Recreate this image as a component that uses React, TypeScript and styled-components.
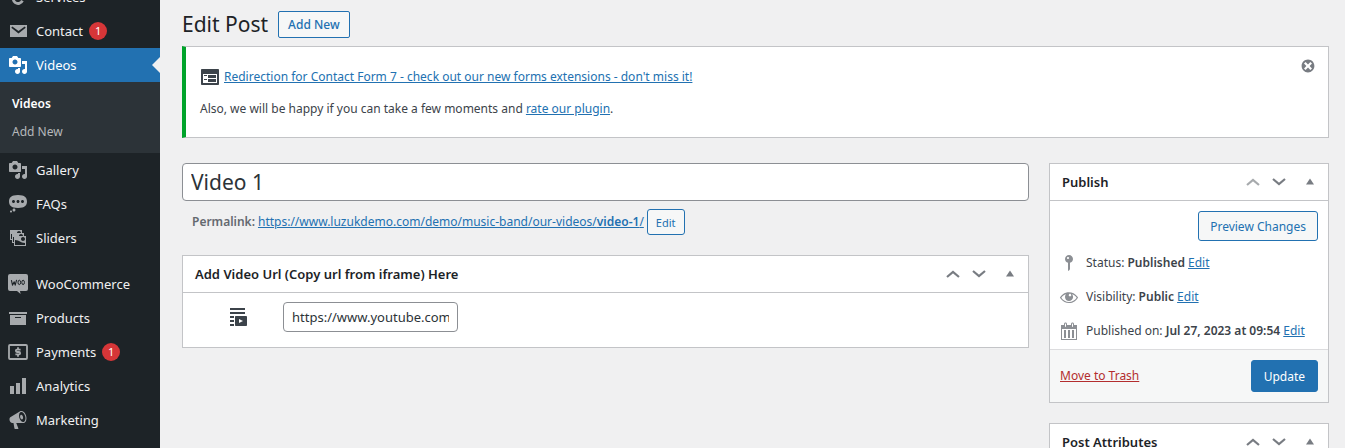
import React from "react";
import styled, { createGlobalStyle, css } from "styled-components";

const GlobalStyle = createGlobalStyle`
  *, *::before, *::after { box-sizing: border-box; }
  body {
    margin: 0;
    background: #f0f0f1;
    color: #3c434a;
    font-family: "Segoe UI", "Noto Sans", "Open Sans", sans-serif;
    font-size: 12px;
    line-height: 18px;
  }
  button, input { font-family: inherit; }
  h1, h2, p, ul, dl { margin: 0; padding: 0; }
  ul { list-style: none; }
`;

const blue = "#2271b1";
const line = "#c3c4c7";

/* ---------- icons ---------- */

const icons = {
  email:
    "M2 4h17v12H2V4zm8.5 8.6l7.2-5.8-1-1.3-6.2 4.4-6.2-4.4-1 1.3z",
  media:
    "M13 11V4c0-.55-.45-1-1-1h-1.67L9 1H5L3.67 3H2c-.55 0-1 .45-1 1v7c0 .55.45 1 1 1h10c.55 0 1-.45 1-1zM7 4.5c1.38 0 2.5 1.12 2.5 2.5S8.38 9.5 7 9.5 4.5 8.38 4.5 7 5.62 4.5 7 4.5zM14 6h5v10.5c0 1.38-1.12 2.5-2.5 2.5S14 17.88 14 16.5s1.12-2.5 2.5-2.5c.17 0 .34.02.5.05V9h-3V6zm-4 8.05V13h2v3.5c0 1.38-1.12 2.5-2.5 2.5S7 17.88 7 16.5 8.12 14 9.5 14c.17 0 .34.02.5.05z",
  status:
    "M10 1c7 0 9 2.91 9 6.5S17 14 10 14s-9-2.91-9-6.5S3 1 10 1zM5.5 9C6.33 9 7 8.33 7 7.5S6.33 6 5.5 6 4 6.67 4 7.5 4.67 9 5.5 9zM10 9c.83 0 1.5-.67 1.5-1.5S10.83 6 10 6s-1.5.67-1.5 1.5S9.17 9 10 9zm4.5 0c.83 0 1.5-.67 1.5-1.5S15.33 6 14.5 6 13 6.67 13 7.5 13.67 9 14.5 9zM6 14.5c.83 0 1.5.67 1.5 1.5s-.67 1.5-1.5 1.5-1.5-.67-1.5-1.5.67-1.5 1.5-1.5zm-3 2c.55 0 1 .45 1 1s-.45 1-1 1-1-.45-1-1 .45-1 1-1z",
  images:
    "M4 15v-3H2V2h12v3h2v3h2v10H6v-3H4zm7-12c-1.1 0-2 .9-2 2h4c0-1.1-.89-2-2-2zm-7 8V6H3v5h1zm7-3h4c0-1.1-.89-2-2-2-1.1 0-2 .9-2 2zm-5 6V9H5v5h1zm9-1c1.1 0 2-.89 2-2 0-1.1-.9-2-2-2s-2 .9-2 2c0 1.11.9 2 2 2zm2 4v-2c-5 0-5-3-10-3v5h10z",
  archive: "M19 4v2H1V4h18zM2 7h16v10H2V7zm11 3V9H7v1h6z",
  chart: "M18 18V2h-4v16h4zm-6 0V7H8v11h4zm-6 0v-8H2v8h4z",
  megaphone:
    "M18.15 5.94c.46 1.62.38 3.22-.02 4.48-.42 1.28-1.26 2.18-2.3 2.48-.16.06-.26.06-.4.06-.06.02-.12.02-.18.02-.06.02-.14.02-.22.02h-6.8l2.22 5.5c.02.14-.06.26-.14.34-.08.1-.24.16-.34.16H6.95c-.1 0-.26-.06-.34-.16-.08-.08-.16-.2-.14-.34l-1-5.5H4.25l-.02-.02c-.5.06-1.08-.18-1.54-.62s-.88-1.08-1.06-1.88c-.24-.8-.2-1.56-.02-2.2.18-.62.58-1.08 1.06-1.3l.02-.02 9-5.4c.1-.06.18-.1.24-.16.06-.04.14-.08.24-.12.16-.08.28-.12.5-.18 1.04-.3 2.24.1 3.22.98s1.84 2.24 2.26 3.86zm-2.58 5.98h-.02c.4-.1.74-.34 1.04-.7.58-.7.86-1.76.86-3.04 0-.64-.1-1.3-.28-1.98-.34-1.36-1.02-2.5-1.78-3.24s-1.68-1.1-2.46-.88c-.82.22-1.4.96-1.7 2-.32 1.04-.28 2.36.06 3.72.38 1.36 1 2.5 1.8 3.24.78.74 1.62 1.1 2.48.88zm-2.54-7.08c.22-.04.42-.02.62.04.38.16.76.48 1.02 1s.42 1.2.42 1.78c0 .3-.04.56-.12.8-.18.48-.44.84-.86.94-.34.1-.8-.06-1.14-.4s-.64-.86-.78-1.5c-.18-.62-.12-1.24.02-1.72s.48-.84.82-.94z",
  pin: "M14 6c0 1.86-1.28 3.41-3 3.86V16c0 1-2 2-2 2V9.86c-1.72-.45-3-2-3-3.86 0-2.21 1.79-4 4-4s4 1.79 4 4zM8 5c0 .55.45 1 1 1s1-.45 1-1-.45-1-1-1-1 .45-1 1z",
  eye: "M18.3 9.5C15 4.9 8.5 3.8 3.9 7.2c-1.2.9-2.2 2.1-3 3.4.2.4.5.8.8 1.2 3.3 4.6 9.6 5.6 14.2 2.4.9-.7 1.7-1.4 2.4-2.4.3-.4.5-.8.8-1.2-.3-.4-.5-.8-.8-1.1zm-8.2-2.3c.5-.5 1.3-.5 1.8 0s.5 1.3 0 1.8-1.3.5-1.8 0-.5-1.3 0-1.8zm-.1 7.7c-3.1 0-6-1.6-7.7-4.2C3.5 9 5.1 7.8 7 7.2c-.7.8-1 1.7-1 2.7 0 2.2 1.7 4.1 4 4.1 2.2 0 4.1-1.7 4.1-4v-.1c0-1-.4-2-1.1-2.7 1.9.6 3.5 1.8 4.7 3.5-1.7 2.6-4.6 4.2-7.7 4.2z",
  calendar:
    "M15 4h3v15H2V4h3V3c0-.41.15-.76.44-1.06.29-.29.65-.44 1.06-.44s.77.15 1.06.44c.29.3.44.65.44 1.06v1h4V3c0-.41.15-.76.44-1.06.29-.29.65-.44 1.06-.44s.77.15 1.06.44c.29.3.44.65.44 1.06v1zM6 3v2.5c0 .14.05.26.15.36.09.09.21.14.35.14s.26-.05.35-.14c.1-.1.15-.22.15-.36V3c0-.14-.05-.26-.15-.35-.09-.1-.21-.15-.35-.15s-.26.05-.35.15c-.1.09-.15.21-.15.35zm7 0v2.5c0 .14.05.26.14.36.1.09.22.14.36.14s.26-.05.36-.14c.09-.1.14-.22.14-.36V3c0-.14-.05-.26-.14-.35-.1-.1-.22-.15-.36-.15s-.26.05-.36.15c-.09.09-.14.21-.14.35zm4 15V8H3v10h14zM7 9v8H5V9h2zm4 0v8H9V9h2zm4 0v8h-2V9h2z",
  dismiss:
    "M10 2c4.42 0 8 3.58 8 8s-3.58 8-8 8-8-3.58-8-8 3.58-8 8-8zm5 11l-3-3 3-3-2-2-3 3-3-3-2 2 3 3-3 3 2 2 3-3 3 3z",
  form: "M2 2h16c.55 0 1 .45 1 1v14c0 .55-.45 1-1 1H2c-.55 0-1-.45-1-1V3c0-.55.45-1 1-1zm15 14V7H3v9h14zM4 8v1h3V8H4zm4 0v3h8V8H8zm-4 4v1h3v-1H4zm4 0v3h8v-3H8z",
  playlist:
    "M17 3V1H2v2h15zm0 4V5H2v2h15zM6 11V9H2v2h4zm2-2h10c.55 0 1 .45 1 1v8c0 .55-.45 1-1 1H8c-.55 0-1-.45-1-1v-8c0-.55.45-1 1-1zm3 7l4-2-4-2v4zm-5-1v-2H2v2h4zm0 4v-2H2v2h4z",
};

const Svg = styled.svg<{ $size?: number }>`
  display: block;
  flex: none;
  width: ${(p) => p.$size ?? 20}px;
  height: ${(p) => p.$size ?? 20}px;
  fill: currentColor;
`;

const Icon = ({ name, size }: { name: keyof typeof icons; size?: number }) => (
  <Svg viewBox="0 0 20 20" $size={size} aria-hidden="true">
    <path d={icons[name]} fillRule="evenodd" />
  </Svg>
);

const ServicesIcon = () => (
  <Svg viewBox="0 0 20 20" aria-hidden="true">
    <path d="M14 9a4.8 4.8 0 1 0 .4 4.6" fill="none" stroke="currentColor" strokeWidth="2.8" />
  </Svg>
);

const WooIcon = () => (
  <Svg viewBox="0 0 20 20" aria-hidden="true">
    <path d="M2 0h16a2 2 0 0 1 2 2v13a2 2 0 0 1-2 2h-6l.6 3-3.6-3H2a2 2 0 0 1-2-2V2a2 2 0 0 1 2-2z" />
    <path
      d="M3.4 6.2l1.1 5 1.7-3.4 1 3.4 1.4-5.4"
      fill="none"
      stroke="#1d2327"
      strokeWidth="1.1"
      strokeLinejoin="round"
    />
    <ellipse cx="11.3" cy="8.4" rx="1.3" ry="2.2" fill="none" stroke="#1d2327" strokeWidth="1" />
    <ellipse cx="15.1" cy="8.4" rx="1.3" ry="2.2" fill="none" stroke="#1d2327" strokeWidth="1" />
  </Svg>
);

const PaymentsIcon = () => (
  <Svg viewBox="0 0 20 20" aria-hidden="true">
    <rect x="1" y="3" width="18" height="14" rx="1" fill="none" stroke="currentColor" strokeWidth="1.8" />
    <path
      d="M12.6 7.7H9a1.1 1.1 0 0 0 0 2.3h2a1.1 1.1 0 0 1 0 2.3H7.4M10 5.2v2.2M10 12.6v2.2"
      fill="none"
      stroke="currentColor"
      strokeWidth="1.8"
    />
  </Svg>
);

const Chevron = ({ down }: { down?: boolean }) => (
  <Svg viewBox="0 0 20 20" aria-hidden="true">
    <path d={down ? "M4 7l6 5 6-5" : "M4 13l6-5 6 5"} fill="none" stroke="currentColor" strokeWidth="2.2" />
  </Svg>
);

const Triangle = () => (
  <Svg viewBox="0 0 20 20" aria-hidden="true">
    <path d="M6 12.5h8L10 6.5z" />
  </Svg>
);

/* ---------- page frame ---------- */

const Page = styled.div`
  display: flex;
  align-items: stretch;
  height: 100vh;
  overflow: hidden;
`;

const Sidebar = styled.nav`
  flex: none;
  width: 160px;
  background: #1d2327;
  font-size: 13px;
`;

const Menu = styled.ul`
  margin-top: -20px;
`;

const MenuEntry = styled.li<{ $spaced?: boolean }>`
  margin-top: ${(p) => (p.$spaced ? 12 : 0)}px;
`;

const MenuLink = styled.a<{ $current?: boolean }>`
  position: relative;
  display: flex;
  align-items: center;
  gap: 8px;
  height: 34px;
  padding: 0 8px;
  color: #f0f0f1;
  text-decoration: none;
  ${(p) =>
    p.$current &&
    css`
      background: ${blue};
      color: #fff;
      &::after {
        content: "";
        position: absolute;
        right: 0;
        top: 50%;
        margin-top: -8px;
        border: 8px solid transparent;
        border-left-width: 0;
        border-right-color: #f0f0f1;
      }
    `}
  > svg { color: ${(p) => (p.$current ? "#fff" : "#a7aaad")}; }
`;

const Count = styled.span`
  width: 18px;
  height: 18px;
  margin-left: -2px;
  border-radius: 9px;
  background: #d63638;
  color: #fff;
  font-size: 11px;
  text-align: center;
`;

const SubMenu = styled.ul`
  padding: 8px 0 7px;
  background: #2c3338;
`;

const SubLink = styled.a<{ $current?: boolean }>`
  display: block;
  padding: 5px 12px;
  color: ${(p) => (p.$current ? "#fff" : "#b5b8bb")};
  font-size: 12px;
  font-weight: ${(p) => (p.$current ? 600 : 400)};
  text-decoration: none;
`;

const Content = styled.main`
  flex: 1;
  min-width: 0;
  padding: 8px 16px 0 22px;
`;

/* ---------- shared controls ---------- */

const Link = styled.a<{ $danger?: boolean }>`
  color: ${(p) => (p.$danger ? "#b32d2e" : blue)};
`;

const Button = styled.button<{ $kind?: "title" | "small" | "primary" }>`
  height: 30px;
  padding: 0 11px;
  border: 1px solid ${blue};
  border-radius: 3px;
  background: #f6f7f7;
  color: ${blue};
  font-size: 12px;
  white-space: nowrap;
  ${(p) =>
    p.$kind === "title" &&
    css`
      height: 27px;
      padding: 0 9px;
      border-radius: 2px;
      font-weight: 500;
    `}
  ${(p) =>
    p.$kind === "small" &&
    css`
      height: 26px;
      padding: 0 8px;
      font-size: 11px;
    `}
  ${(p) =>
    p.$kind === "primary" &&
    css`
      height: 32px;
      padding: 0 12px;
      background: ${blue};
      color: #fff;
    `}
`;

/* ---------- heading and notice ---------- */

const Heading = styled.header`
  display: flex;
  align-items: center;
  gap: 10px;
  height: 32px;
  h1 {
    color: #1d2327;
    font-size: 21px;
    font-weight: 400;
    line-height: 32px;
  }
`;

const Notice = styled.section`
  display: flex;
  justify-content: space-between;
  align-items: flex-start;
  margin-top: 6px;
  padding: 11px 12px 19px 14px;
  border: 1px solid ${line};
  border-left: 4px solid #00a32a;
  background: #fff;
`;

const NoticeBody = styled.div`
  display: grid;
  gap: 13px;
  padding-top: 9px;
`;

const NoticeLine = styled.p`
  display: flex;
  align-items: center;
  gap: 4px;
  line-height: 20px;
`;

const IconButton = styled.button<{ $width: number; $faded?: boolean }>`
  display: flex;
  align-items: center;
  justify-content: center;
  width: ${(p) => p.$width}px;
  padding: 0;
  border: 0;
  background: none;
  color: ${(p) => (p.$faded ? "#a7aaad" : "#787c82")};
`;

/* ---------- editor columns ---------- */

const Columns = styled.div`
  display: grid;
  grid-template-columns: minmax(0, 1fr) 280px;
  gap: 20px;
  margin-top: 25px;
  align-items: start;
`;

const TitleInput = styled.input`
  display: block;
  width: 100%;
  height: 38px;
  padding: 0 8px;
  border: 1px solid #8c8f94;
  border-radius: 4px;
  background: #fff;
  color: #2c3338;
  font-size: 21px;
`;

const Permalink = styled.div`
  display: flex;
  align-items: center;
  gap: 3px;
  margin: 8px 10px 20px;
  color: #646970;
  > b { font-weight: 600; }
  a b { font-weight: 600; }
`;

const Card = styled.section`
  margin-bottom: 20px;
  border: 1px solid ${line};
  background: #fff;
`;

const CardHead = styled.header`
  display: flex;
  align-items: stretch;
  height: 37px;
  padding-left: 12px;
  border-bottom: 1px solid ${line};
  h2 {
    flex: 1;
    color: #1d2327;
    font-size: 13px;
    font-weight: 600;
    line-height: 36px;
  }
`;

const VideoRow = styled.div`
  display: flex;
  align-items: flex-start;
  padding: 9px 0 15px 45px;
  gap: 35px;
  color: #3c434a;
  label { padding-top: 5px; }
`;

const UrlInput = styled.input`
  width: 175px;
  height: 30px;
  padding: 0 8px;
  border: 1px solid #8c8f94;
  border-radius: 4px;
  background: #fff;
  color: #2c3338;
  font-size: 13px;
`;

const PublishBody = styled.div`
  padding: 10px 10px 1px 9px;
`;

const PreviewRow = styled.div`
  display: flex;
  justify-content: flex-end;
  margin-bottom: 5px;
`;

const Info = styled.div`
  display: flex;
  align-items: center;
  gap: 7px;
  height: 34px;
  white-space: nowrap;
  svg { color: #8c8f94; }
  b { font-weight: 600; }
`;

const PublishFoot = styled.footer`
  display: flex;
  align-items: center;
  justify-content: space-between;
  padding: 10px;
  border-top: 1px solid #dcdcde;
  background: #f6f7f7;
`;

const CardHeader = ({ title, first }: { title: string; first?: boolean }) => (
  <CardHead>
    <h2>{title}</h2>
    <IconButton type="button" $width={26} $faded={first} aria-label={`Move ${title} up`}>
      <Chevron />
    </IconButton>
    <IconButton type="button" $width={26} aria-label={`Move ${title} down`}>
      <Chevron down />
    </IconButton>
    <IconButton type="button" $width={36} aria-label={`Toggle ${title}`}>
      <Triangle />
    </IconButton>
  </CardHead>
);

type Item = { label: string; icon: React.ReactNode; count?: number; spaced?: boolean; children?: string[] };

const items: Item[] = [
  { label: "Services", icon: <ServicesIcon /> },
  { label: "Contact", icon: <Icon name="email" />, count: 1 },
  { label: "Videos", icon: <Icon name="media" />, children: ["Videos", "Add New"] },
  { label: "Gallery", icon: <Icon name="media" /> },
  { label: "FAQs", icon: <Icon name="status" /> },
  { label: "Sliders", icon: <Icon name="images" /> },
  { label: "WooCommerce", icon: <WooIcon />, spaced: true },
  { label: "Products", icon: <Icon name="archive" /> },
  { label: "Payments", icon: <PaymentsIcon />, count: 1 },
  { label: "Analytics", icon: <Icon name="chart" /> },
  { label: "Marketing", icon: <Icon name="megaphone" /> },
];

export default function App() {
  return (
    <>
      <GlobalStyle />
      <Page>
        <Sidebar>
          <Menu>
            {items.map((item) => (
              <MenuEntry key={item.label} $spaced={item.spaced}>
                <MenuLink href="#" $current={!!item.children}>
                  {item.icon}
                  <span>{item.label}</span>
                  {item.count && <Count>{item.count}</Count>}
                </MenuLink>
                {item.children && (
                  <SubMenu>
                    {item.children.map((child, i) => (
                      <li key={child}>
                        <SubLink href="#" $current={i === 0}>
                          {child}
                        </SubLink>
                      </li>
                    ))}
                  </SubMenu>
                )}
              </MenuEntry>
            ))}
          </Menu>
        </Sidebar>

        <Content>
          <Heading>
            <h1>Edit Post</h1>
            <Button type="button" $kind="title">
              Add New
            </Button>
          </Heading>

          <Notice>
            <NoticeBody>
              <NoticeLine>
                <Icon name="form" />
                <Link href="#">
                  Redirection for Contact Form 7 - check out our new forms extensions - don't miss it!
                </Link>
              </NoticeLine>
              <p>
                Also, we will be happy if you can take a few moments and <Link href="#">rate our plugin</Link>.
              </p>
            </NoticeBody>
            <IconButton type="button" $width={16} aria-label="Dismiss this notice">
              <Icon name="dismiss" size={16} />
            </IconButton>
          </Notice>

          <Columns>
            <div>
              <TitleInput aria-label="Title" defaultValue="Video 1" />
              <Permalink>
                <b>Permalink:</b>
                <Link href="#">
                  https://www.luzukdemo.com/demo/music-band/our-videos/<b>video-1</b>/
                </Link>
                <Button type="button" $kind="small">
                  Edit
                </Button>
              </Permalink>
              <Card>
                <CardHeader title="Add Video Url (Copy url from iframe) Here" />
                <VideoRow>
                  <label htmlFor="video-url" aria-label="Video URL">
                    <Icon name="playlist" />
                  </label>
                  <UrlInput id="video-url" defaultValue="https://www.youtube.com/embed/video" />
                </VideoRow>
              </Card>
            </div>

            <aside>
              <Card>
                <CardHeader title="Publish" first />
                <PublishBody>
                  <PreviewRow>
                    <Button type="button">Preview Changes</Button>
                  </PreviewRow>
                  <Info>
                    <Icon name="pin" />
                    <span>
                      Status: <b>Published</b> <Link href="#">Edit</Link>
                    </span>
                  </Info>
                  <Info>
                    <Icon name="eye" />
                    <span>
                      Visibility: <b>Public</b> <Link href="#">Edit</Link>
                    </span>
                  </Info>
                  <Info>
                    <Icon name="calendar" />
                    <span>
                      Published on: <b>Jul 27, 2023 at 09:54</b> <Link href="#">Edit</Link>
                    </span>
                  </Info>
                </PublishBody>
                <PublishFoot>
                  <Link href="#" $danger>
                    Move to Trash
                  </Link>
                  <Button type="submit" $kind="primary">
                    Update
                  </Button>
                </PublishFoot>
              </Card>
              <Card>
                <CardHeader title="Post Attributes" />
              </Card>
            </aside>
          </Columns>
        </Content>
      </Page>
    </>
  );
}
